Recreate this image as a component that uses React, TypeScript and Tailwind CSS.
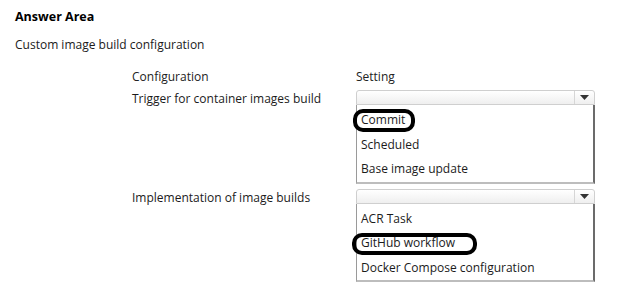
import React from 'react'

const font = { fontFamily: '"Open Sans", "Noto Sans", sans-serif' }

function Dropdown({ items, circle }: { items: string[]; circle: string }) {
  return (
    <div className="w-[239px]">
      {/* closed select */}
      <div className="flex h-[15px] rounded-t-[3px] border border-[#cfcfcf] bg-gradient-to-b from-white to-[#efefef]">
        <div className="flex-1" />
        <div className="flex w-[20px] items-center justify-center border-l border-[#d6d6d6]">
          <svg width="9" height="5" viewBox="0 0 9 5">
            <path d="M0 0 H9 L4.5 5 Z" fill="#333" />
          </svg>
        </div>
      </div>
      {/* open list */}
      <div className="relative border-b-2 border-l border-r-2 border-b-[#bdbdbd] border-l-[#9a9a9a] border-r-[#6b6b6b] pt-[3px]">
        {items.map((item) => (
          <div key={item} className="flex h-[24.5px] items-center pl-[4px] text-[12px] text-[#1b1b1b]">
            {item}
          </div>
        ))}
        <div className={`absolute rounded-[10px] border-[4px] border-black ${circle}`} />
      </div>
    </div>
  )
}

export default function App() {
  return (
    <div className="h-[301px] w-[624px] bg-white px-[15px] pt-[8px] text-[#1b1b1b]" style={font}>
      <div className="text-[12.5px] font-bold leading-[18px] text-black">Answer Area</div>
      <div className="mt-[10px] text-[12px] leading-[18px]">Custom image build configuration</div>

      <div className="ml-[117px] mt-[14px] grid grid-cols-[224px_239px] text-[12px]">
        <div className="h-[22px] leading-[18px] text-[#222]">Configuration</div>
        <div className="h-[22px] leading-[18px] text-[#222]">Setting</div>

        <div className="leading-[18px]">Trigger for container images build</div>
        <Dropdown
          items={['Commit', 'Scheduled', 'Base image update']}
          circle="left-[-4px] top-[4px] h-[23px] w-[62px]"
        />

        <div className="mt-[5px] leading-[18px]">Implementation of image builds</div>
        <div className="mt-[5px]">
          <Dropdown
            items={['ACR Task', 'GitHub workflow', 'Docker Compose configuration']}
            circle="left-[-5px] top-[29px] h-[22px] w-[125px]"
          />
        </div>
      </div>
    </div>
  )
}
